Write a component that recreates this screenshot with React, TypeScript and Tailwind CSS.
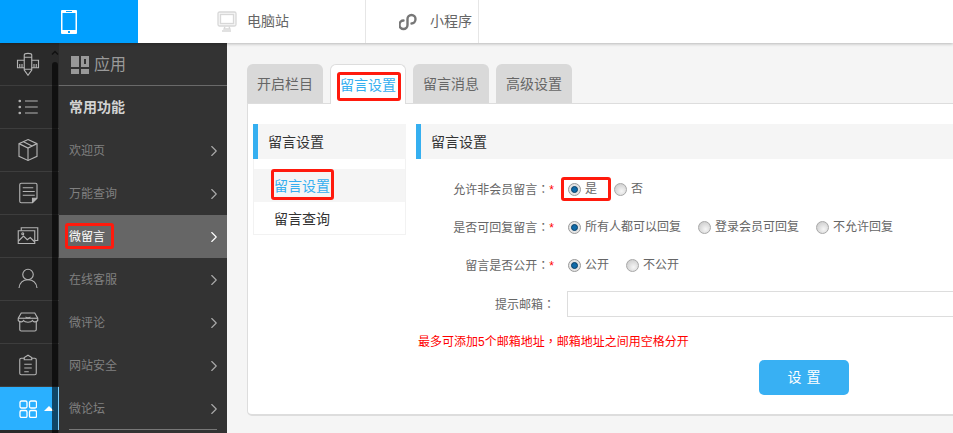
import type { ReactNode } from "react";
import { ChevronRight } from "lucide-react";

const railIcons: ReactNode[] = [
  // ruler and pencil
  <>
    <path d="M11 11H2v10h9M21 11h9v10h-9" />
    <path d="M11 4c0-3 10-3 10 0v20l-5 7-5-7zM11 7h10M11 23h10" />
    <path d="M5 16v5M8 16v5M24 16v5M27 16v5" />
  </>,
  // list
  <>
    <path d="M12 8h17M12 16h17M12 24h17" />
    <circle cx="5" cy="8" r="1" fill="currentColor" />
    <circle cx="5" cy="16" r="1" fill="currentColor" />
    <circle cx="5" cy="24" r="1" fill="currentColor" />
  </>,
  // box
  <>
    <path d="M16 2l12 5.500v17L16 30 4 24.500v-17z" />
    <path d="M4 7.500l12 6 12-6M16 13.500V30M10 5l12 6" />
  </>,
  // note
  <>
    <path d="M7 3h19a2 2 0 0 1 2 2v18l-6 6H7a2 2 0 0 1-2-2V5a2 2 0 0 1 2-2z" />
    <path d="M9 9h14M9 14h16M9 19h16" />
    <path d="M22 29v-6h6" fill="currentColor" />
  </>,
  // pictures
  <>
    <path d="M3 9h22v17H3z" />
    <path d="M7 9V5h22v17h-4" />
    <path d="M3 23l7-7 5 5 4-3 6 6" />
    <circle cx="9" cy="13" r="1.300" />
  </>,
  // person
  <>
    <circle cx="16" cy="10" r="7" />
    <path d="M4 28c1-8 6-11 12-11s11 3 12 11" />
  </>,
  // store
  <>
    <path d="M7 4h18l4 7v3c-3 3-6 2-7 0-2 3-10 3-12 0-1 2-4 3-7 0v-3z" />
    <path d="M13 9c0 2 6 2 6 0" />
    <path d="M5 16v10a2 2 0 0 0 2 2h18a2 2 0 0 0 2-2V16" />
    <path d="M3 11h26" />
  </>,
  // clipboard
  <>
    <path d="M11 7H7a2 2 0 0 0-2 2v18a2 2 0 0 0 2 2h18a2 2 0 0 0 2-2V9a2 2 0 0 0-2-2h-4" />
    <path d="M11 9V6l5-3 5 3v3z" />
    <path d="M11 15h10M11 20h10M11 25h6" />
  </>,
];

const subItems = [
  { label: "欢迎页" },
  { label: "万能查询" },
  { label: "微留言", active: true },
  { label: "在线客服" },
  { label: "微评论" },
  { label: "网站安全" },
  { label: "微论坛" },
];

const tabs = [
  { label: "开启栏目" },
  { label: "留言设置", active: true },
  { label: "留言消息" },
  { label: "高级设置" },
];

const Mark = ({ className }: { className: string }) => (
  <span className={`absolute border-[3px] border-[#ff1a0d] rounded-[3px] ${className}`} />
);

// full-width punctuation sits centred in the TC face, as in the picture
const Punct = ({ children }: { children: string }) => (
  <span className="font-['Noto_Sans_CJK_TC']">{children}</span>
);

const Radio = ({ label, checked, children }: { label: string; checked?: boolean; children?: ReactNode }) => (
  <span className="relative flex items-center gap-[4px] h-4">
    {checked ? (
      <span className="flex items-center justify-center w-[13px] h-[13px] rounded-full border border-[#9a9a9a] bg-[#e4e4e4]">
        <span className="w-[7px] h-[7px] rounded-full bg-[#0f6aa8] border border-[#0a3f66]" />
      </span>
    ) : (
      <span className="w-[13px] h-[13px] rounded-full border border-[#a8a8a8] bg-[radial-gradient(circle_at_60%_65%,#f6f6f6,#c4c4c4)]" />
    )}
    <span>{label}</span>
    {children}
  </span>
);

const FormRow = ({ label, children }: { label: string; children: ReactNode }) => (
  <div className="flex items-center h-[38px]">
    <div className="w-[140px] shrink-0 pr-[2px] text-right whitespace-nowrap">
      {label}
      <Punct>：</Punct>
      <span className="text-[#ff0000]">*</span>
    </div>
    <div className="flex items-center gap-[17px] pl-3">{children}</div>
  </div>
);

const BlockTitle = ({ children }: { children: ReactNode }) => (
  <div className="flex items-center h-[35px] pt-px pl-[10px] bg-[#f5f5f5] border-l-[5px] border-[#35aff0] text-[14px] text-[#333]">
    {children}
  </div>
);

export default function App() {
  return (
    <div
      className="w-[953px] h-[433px] overflow-hidden flex flex-col bg-[#f5f5f5] text-[12px] text-[#666]"
      style={{ fontFamily: '"Liberation Sans", "Noto Sans CJK SC", sans-serif' }}
    >
      {/* Top bar */}
      <header className="relative z-10 flex h-[43px] shrink-0 bg-white shadow-[0_1px_3px_rgba(0,0,0,0.25)] text-[14px]">
        <div className="flex items-center justify-center w-[138px] bg-[#00a0ff]">
          <svg width="16" height="24" viewBox="0 0 16 24">
            <rect width="16" height="24" rx="1" fill="#fff" />
            <rect x="1.500" y="3" width="13" height="17" fill="#00a0ff" />
            <rect x="5" y="1" width="6" height="1" fill="#00a0ff" />
            <rect x="7" y="21" width="2" height="2" fill="#00a0ff" />
          </svg>
        </div>
        <div className="flex items-center gap-[10px] w-[228px] pl-[79px] border-r border-[#e6e6e6]">
          <svg width="20" height="21" viewBox="0 0 20 21" fill="none" stroke="#d8d8d8" strokeWidth="1.300">
            <rect x="1" y="1" width="18" height="14" rx="1.500" fill="#f6f6f6" />
            <rect x="3.500" y="3.500" width="13" height="9" fill="#fff" />
            <path d="M8 15.500l-1 2.500h6l-1-2.500M5 20h9" />
          </svg>
          <span>电脑站</span>
        </div>
        <div className="flex items-center gap-[13px] w-[113px] pl-[33px] border-r border-[#e6e6e6]">
          <svg width="18" height="18" viewBox="0 0 18 18" fill="none" stroke="#777" strokeWidth="2.400" strokeLinecap="round">
            <path d="M12.500 10.500c2 0 4-1.500 4-4.500a4 4 0 0 0-8 0v6a4 4 0 0 1-8 0c0-3 2-4.500 4-4.500" />
          </svg>
          <span>小程序</span>
        </div>
      </header>

      <div className="flex flex-1 min-h-0">
        {/* Icon rail */}
        <nav className="relative w-[59px] shrink-0 bg-[#2a2a2a] text-[#b4b4b4]">
          {railIcons.map((icon, i) => (
            <div key={i} className="flex items-center justify-center h-[43px] border-b border-[#3d3d3d] pr-[4px]">
              <svg width="24" height="24" viewBox="0 0 32 32" fill="none" stroke="currentColor" strokeWidth="1.500">
                {icon}
              </svg>
            </div>
          ))}
          <div className="flex items-center h-[43px] bg-[#2ab0ff] border-r border-[#7fd0ff] text-white">
            <svg className="ml-[19px]" width="18" height="18" viewBox="0 0 18 18" fill="none" stroke="currentColor" strokeWidth="1.300">
              <rect x="1" y="1" width="7" height="7" rx="1.500" />
              <rect x="10.500" y="1" width="7" height="7" rx="1.500" />
              <rect x="1" y="10.500" width="7" height="7" rx="1.500" />
              <rect x="10.500" y="10.500" width="7" height="7" rx="1.500" />
            </svg>
            <span className="ml-[7px] w-0 h-0 border-x-[5px] border-x-transparent border-b-[5px] border-b-white" />
          </div>
          {/* Scrollbar sits over the rail */}
          <svg className="absolute left-[51px] top-[7px]" width="8" height="5" viewBox="0 0 8 5" fill="none" stroke="#111" strokeWidth="1.500">
            <path d="M1 4.500l3-3 3 3" />
          </svg>
          <div className="absolute left-[52px] top-[19px] bottom-0 w-[6px] rounded-t-[3px] bg-black/60" />
        </nav>

        {/* Second level menu */}
        <aside className="w-[168px] shrink-0 bg-[#333333] text-[#808080]">
          <div className="flex items-center gap-[5px] h-[43px] pl-[12px] pt-[1px] border-b border-[#6a6a6a] text-[16px] text-[#9a9a9a]">
            <span className="grid grid-cols-2 gap-[2px] w-[18px] h-[18px]">
              <span className="bg-[#999]" />
              <span className="border-[3px] border-[#999]" />
              <span className="bg-[#999]" />
              <span className="bg-[#999]" />
            </span>
            应用
          </div>
          <div className="flex items-center h-[43px] pl-[10px] text-[14px] font-bold text-[#d2d2d2]">常用功能</div>
          {subItems.map((item) => (
            <div
              key={item.label}
              className={`relative flex items-center justify-between h-[43px] pl-[10px] pr-[4px] text-[12px] ${
                item.active ? "bg-[#666666] text-white" : ""
              }`}
            >
              {item.label}
              <ChevronRight size={18} strokeWidth={1.500} className={item.active ? "text-white" : "text-[#aaa]"} />
              {item.active && <Mark className="left-[6px] top-[8px] w-[49px] h-[26px]" />}
            </div>
          ))}
          <div className="-mt-[1px] mx-[10px] h-px bg-[#777]" />
        </aside>

        {/* Content */}
        <main className="flex-1 min-w-0 pl-5 pt-5 overflow-hidden">
          <div className="flex items-end gap-[7px] h-[40px] text-[14px]">
            {tabs.map((tab) => (
              <div
                key={tab.label}
                className={`relative flex items-center justify-center w-[76px] h-[39px] pt-px rounded-t-[6px] ${
                  tab.active
                    ? "z-10 -mb-px h-[40px] bg-white border border-b-0 border-[#ddd] text-[#35aff0]"
                    : "bg-[#d9d9d9] text-[#666]"
                }`}
              >
                {tab.label}
                {tab.active && <Mark className="left-[6px] top-[7px] w-[64px] h-[29px]" />}
              </div>
            ))}
          </div>

          <section className="flex gap-[10px] w-[760px] h-[313px] pl-[5px] pt-5 bg-white border border-[#ddd] border-b-2 rounded-bl-[5px]">
            <div className="w-[153px] shrink-0">
              <BlockTitle>留言设置</BlockTitle>
              <div className="h-[76px] pt-[10px] border-x border-b border-[#f2f2f2] text-[14px] text-[#333]">
                <div className="relative flex items-center h-[33px] pt-px pl-[20px] bg-[#f5f5f5] text-[#35aff0]">
                  留言设置
                  <Mark className="left-[17px] top-0 w-[63px] h-[31px]" />
                </div>
                <div className="flex items-center h-[33px] pt-px pl-[20px]">留言查询</div>
              </div>
            </div>

            <div className="flex-1">
              <BlockTitle>留言设置</BlockTitle>
              <div className="pt-[11px]">
                <FormRow label="允许非会员留言">
                  <Radio label="是" checked>
                    <Mark className="-left-[7px] -top-[4px] -right-[14px] -bottom-[4px]" />
                  </Radio>
                  <Radio label="否" />
                </FormRow>
                <FormRow label="是否可回复留言">
                  <Radio label="所有人都可以回复" checked />
                  <Radio label="登录会员可回复" />
                  <Radio label="不允许回复" />
                </FormRow>
                <FormRow label="留言是否公开">
                  <Radio label="公开" checked />
                  <Radio label="不公开" />
                </FormRow>
                <div className="flex items-center mt-[7px] h-[26px]">
                  <div className="w-[140px] shrink-0 text-right pr-[1px]">
                    提示邮箱<Punct>：</Punct>
                  </div>
                  <div className="ml-[11px] flex-1 h-full bg-white border border-[#ddd]" />
                </div>
                <p className="mt-[16px] text-[12px] leading-4 text-[#ff0000] pl-[2px] whitespace-nowrap">
                  最多可添加5个邮箱地址<Punct>，</Punct>邮箱地址之间用空格分开
                </p>
                <button className="block mt-[10px] ml-[343px] w-[90px] h-[35px] pl-[5px] rounded-[5px] bg-[#38b0f3] text-white text-[14px] tracking-[5px]">
                  设置
                </button>
              </div>
            </div>
          </section>
        </main>
      </div>
    </div>
  );
}
